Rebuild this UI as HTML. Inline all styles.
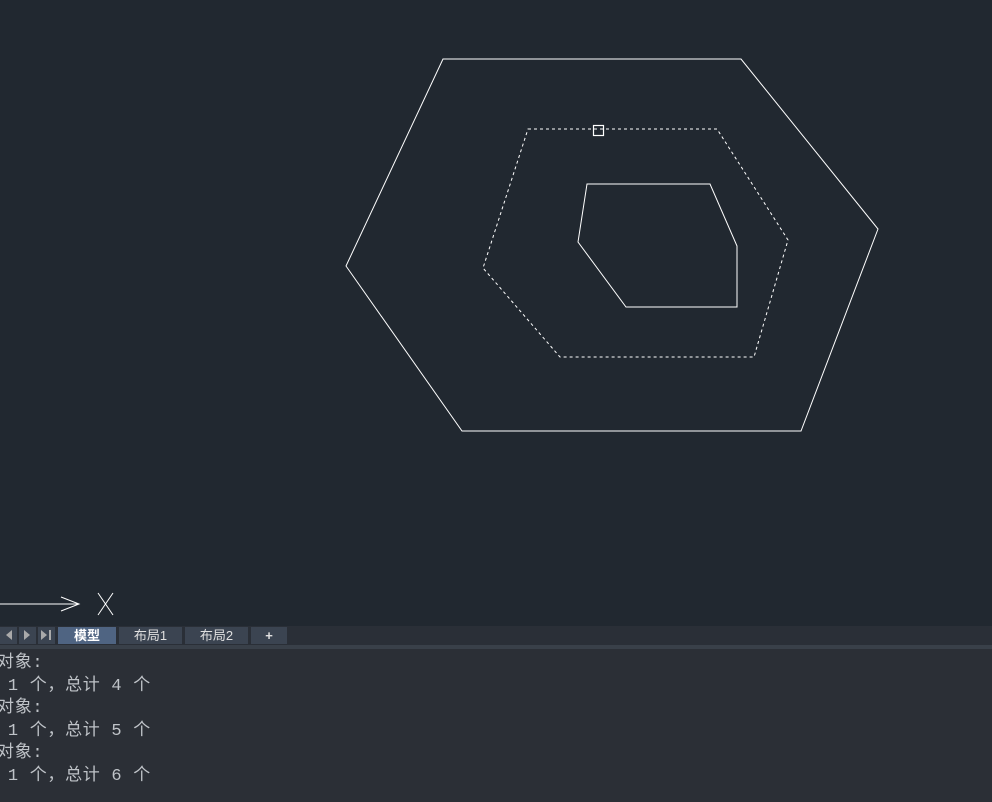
<!DOCTYPE html>
<html><head><meta charset="utf-8"><style>
html,body{margin:0;padding:0;width:992px;height:802px;overflow:hidden;background:#212830;}
#tabs{position:absolute;left:0;top:626px;width:992px;height:19px;background:#2a2f37;}
.t{position:absolute;top:1px;height:17px;background:#3b4451;color:#e0e0e0;font:13px "Liberation Sans","Noto Sans CJK SC",sans-serif;text-align:center;line-height:17px;}
#sep{position:absolute;left:0;top:645px;width:992px;height:4px;background:#394049;}
#cmd{position:absolute;left:0;top:649px;width:992px;height:153px;background:#2b2f36;color:#bfc3c8;font:17px "Liberation Mono","Noto Sans CJK SC",monospace;letter-spacing:0.7px;}
#cmd div{position:absolute;left:-3px;white-space:pre;}
</style></head><body>
<svg width="992" height="626" style="position:absolute;left:0;top:0">
<g fill="none" stroke="#fff" stroke-width="1">
<polygon points="443,59 741,59 878,229 801,431 462,431 346,266"/>
<polygon points="587,184 710,184 737,246 737,307 626,307 578,242"/>
<polygon points="528,129 717,129 788,240 754,357 560,357 483,268" stroke-dasharray="3,3"/>
<rect x="593.5" y="125.5" width="10" height="10" stroke-width="1.2"/>
<line x1="0" y1="604" x2="79" y2="604"/>
<polyline points="61,597 79,604 61,611"/>
<line x1="98" y1="593" x2="113" y2="615"/><line x1="113" y1="593" x2="98" y2="615"/>
</g></svg>
<div id="tabs">
<svg width="57" height="19" style="position:absolute;left:0;top:0">
<rect x="0" y="1" width="17" height="17" fill="#3b4451"/><rect x="19" y="1" width="17" height="17" fill="#3b4451"/><rect x="38" y="1" width="17" height="17" fill="#3b4451"/>
<polygon points="12,4 12,14 6,9" fill="#aaa"/><polygon points="24,4 24,14 30,9" fill="#aaa"/><polygon points="41,4 41,14 47,9" fill="#aaa"/><rect x="49" y="4" width="2" height="10" fill="#aaa"/>
</svg>
<div class="t" style="left:58px;width:58px;background:#4f6482;font-weight:bold;color:#fff">模型</div>
<div class="t" style="left:119px;width:63px">布局1</div>
<div class="t" style="left:185px;width:63px">布局2</div>
<div class="t" style="left:251px;width:36px;font-weight:bold">+</div>
</div>
<div id="sep"></div>
<div id="cmd">
<div style="top:-2px">对象:</div>
<div style="top:21px"> 1 个，总计 4 个</div>
<div style="top:43px">对象:</div>
<div style="top:66px"> 1 个，总计 5 个</div>
<div style="top:88px">对象:</div>
<div style="top:111px"> 1 个，总计 6 个</div>
</div>
</body></html>
